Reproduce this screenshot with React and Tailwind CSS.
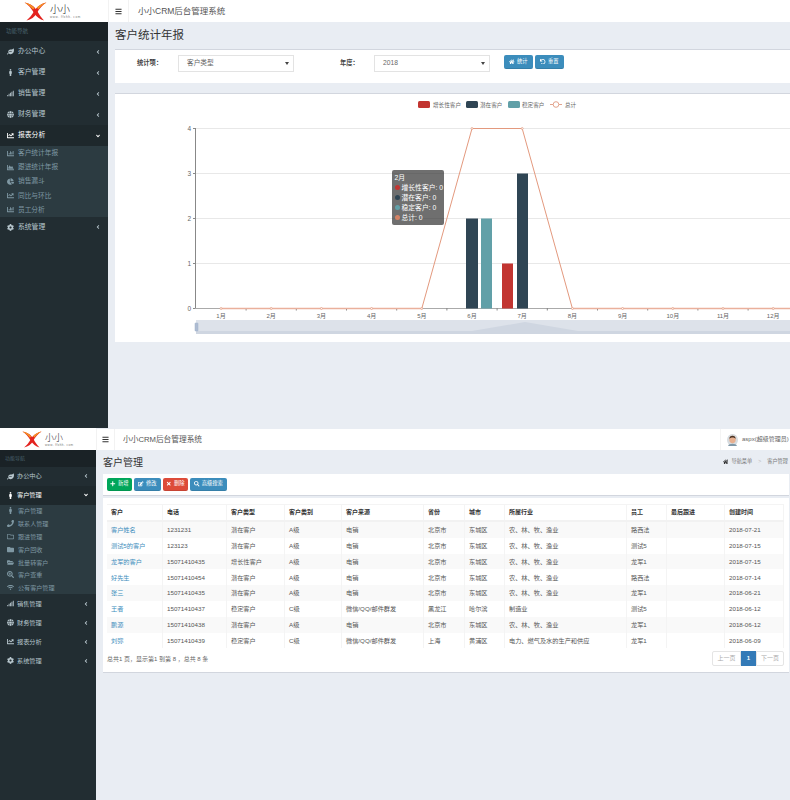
import React from 'react';
import { FaLeaf, FaMale, FaSignal, FaGlobe, FaChartLine, FaCog, FaChartBar, FaChartArea, FaChartPie, FaAngleLeft, FaAngleDown, FaBars, FaHome, FaUndo, FaPlus, FaEdit, FaTimes, FaSearch, FaPhone, FaRegFolder, FaFolder, FaFolderOpen, FaSearchPlus, FaWifi } from 'react-icons/fa';

const font = { fontFamily: '"Liberation Sans","Noto Sans CJK SC",sans-serif' };

function Logo({ big }) {
  return (
    <div className={`flex items-center bg-white shrink-0 ${big ? 'w-[108px] h-[22px] pl-[24px] gap-[3px]' : 'w-[96px] h-[21px] pl-[22px] gap-[3px]'}`}>
      <svg width={big ? 23 : 20} height={big ? 19 : 17} viewBox="0 0 24 20" className="shrink-0">
        <path d="M0.5 0.5 C7 1.5 11 5 13.5 9 C16 13.5 18.5 17 21 19.5 C16.5 18.5 13 15.5 10.5 11.5 C7.5 6.5 4.5 3 0.5 0.5Z" fill="#e3231f" />
        <path d="M23.5 0.5 C17 2 13.5 5 11 9 C8 14 5.5 17 2.5 19.5 C7.5 18.5 11 16 13.5 11.5 C16 7 19.5 3 23.5 0.5Z" fill="#e3231f" />
        <path d="M0.5 0.5 C5 1 8.5 3.5 11 6.5 L9.5 8 C7 4.5 4 2.5 0.5 0.5Z" fill="#f59a23" />
        <path d="M23.5 0.5 C19.5 1 16 3.5 13.5 6 L15 7.5 C17.5 4.5 20 2.5 23.5 0.5Z" fill="#f59a23" />
      </svg>
      <div className="flex flex-col items-start leading-none pt-[1px]">
        <span className={`${big ? 'text-[10px] leading-[11px]' : 'text-[9px] leading-[10px]'} font-light text-[#222]`}>小小</span>
        <span className={`text-[3px] leading-[4px] text-[#777] whitespace-nowrap ${big ? 'tracking-[0.6px]' : 'tracking-[0.45px]'}`}>www. ffxhh. com</span>
      </div>
    </div>
  );
}

function NavItem({ icon: Icon, label, open, h, big }) {
  return (
    <div className={`flex items-center pl-[7px] pr-[7px] ${big ? 'text-[6.8px]' : 'text-[6.2px]'} ${h} ${open ? 'bg-[#1e282c] text-white' : 'text-[#b8c7ce]'}`}>
      <Icon className={`w-[7px] h-[7px] shrink-0 ${big ? 'mr-[4px]' : 'mr-[3px]'}`} />
      <span className="flex-1">{label}</span>
      {open ? <FaAngleDown className="w-[6px] h-[6px]" /> : <FaAngleLeft className="w-[6px] h-[6px]" />}
    </div>
  );
}

function SubItem({ icon: Icon, label, h, big }) {
  return (
    <div className={`flex items-center pl-[7px] ${big ? 'text-[6.7px]' : 'text-[6.1px]'} text-[#7f98a3] ${h}`}>
      <Icon className="w-[7px] h-[7px] shrink-0 mr-[4px] text-[#7f98a3]" />
      <span>{label}</span>
    </div>
  );
}

function Btn({ icon: Icon, label, cls }) {
  return (
    <button className={`flex items-center justify-center gap-[2px] rounded-[2px] text-white text-[5.3px] border-b border-black/10 ${cls}`}>
      <Icon className="w-[5.5px] h-[5.5px]" />{label}
    </button>
  );
}

function Select({ value }) {
  return (
    <div className="w-[116px] h-[17px] bg-white border border-[#e3e3e3] flex items-center justify-between pl-[8px] pr-[4px] text-[6.7px] text-[#666]">
      <span>{value}</span>
      <span className="w-0 h-0 border-l-[2px] border-r-[2px] border-t-[3px] border-l-transparent border-r-transparent border-t-[#444]" />
    </div>
  );
}

const months = ['1月','2月','3月','4月','5月','6月','7月','8月','9月','10月','11月','12月'];
const cx = (i) => 221 + i * 50.2;
const top = 128, Y = (v) => 308.5 - v * 45;

function Chart() {
  const pts = [0,0,0,0,0,4,4,0,0,0,0,0].map((v, i) => `${cx(i)},${Y(v)}`).join(' ');
  return (
    <svg width="675" height="249" viewBox="115 93 675 249" className="block" style={font}>
      <rect x="418" y="101" width="12" height="7" rx="1.5" fill="#c23531" />
      <text x="433" y="107" fontSize="5.6" fill="#666">增长性客户</text>
      <rect x="466" y="101" width="12" height="7" rx="1.5" fill="#2f4554" />
      <text x="480" y="107" fontSize="5.6" fill="#666">潜在客户</text>
      <rect x="508" y="101" width="12" height="7" rx="1.5" fill="#61a0a8" />
      <text x="522" y="107" fontSize="5.6" fill="#666">稳定客户</text>
      <line x1="550" y1="104.5" x2="562" y2="104.5" stroke="#e3a48d" />
      <circle cx="556" cy="104.5" r="2.8" fill="#fff" stroke="#e3a48d" />
      <text x="565" y="107" fontSize="5.6" fill="#666">总计</text>
      {[1,2,3,4].map((v) => <line key={v} x1="195" y1={Y(v)} x2="790" y2={Y(v)} stroke="#e8e8e8" />)}
      <line x1="195.5" y1={top} x2="195.5" y2="309" stroke="#888" />
      <line x1="195" y1="308.5" x2="790" y2="308.5" stroke="#aaa" />
      {[0,1,2,3,4].map((v) => (
        <g key={v}>
          <line x1="193" y1={Y(v)} x2="195" y2={Y(v)} stroke="#888" />
          <text x="191" y={Y(v) + 2.5} fontSize="6.5" fill="#666" textAnchor="end">{v}</text>
        </g>
      ))}
      {months.map((m, i) => (
        <g key={m}>
          <line x1={cx(i) + 25.1} y1="308" x2={cx(i) + 25.1} y2="310.5" stroke="#888" />
          <text x={cx(i)} y="317.5" fontSize="6" fill="#666" textAnchor="middle">{m}</text>
        </g>
      ))}
      <rect x="466" y={Y(2)} width="12" height="90" fill="#2f4554" />
      <rect x="481" y={Y(2)} width="11" height="90" fill="#61a0a8" />
      <rect x="502" y={Y(1)} width="11" height="45" fill="#c23531" />
      <rect x="517" y={Y(3)} width="11" height="135" fill="#2f4554" />
      <polyline points={pts} fill="none" stroke="#e3997e" strokeWidth="1" />
      <line x1="221" y1="308.5" x2="422" y2="308.5" stroke="#eab09c" strokeWidth="1.5" />
      <line x1="572" y1="308.5" x2="790" y2="308.5" stroke="#eab09c" strokeWidth="1.5" />
      {[0,1,2,3,4,5,6,7,8,9,10,11].map((i) => <circle key={i} cx={cx(i)} cy={i === 5 || i === 6 ? Y(4) : Y(0)} r="1" fill="#fff" stroke="#e3997e" strokeWidth="0.7" />)}
      <rect x="196" y="320" width="594" height="14" fill="#dde2ea" />
      <path d="M196 331 L472 331 L525 322 L578 331 L790 331 L790 334 L196 334Z" fill="#cfd6e1" />
      <rect x="195" y="323" width="3" height="8" rx="0.5" fill="#aebcd2" stroke="#9fb1cb" strokeWidth="0.5" />
    </svg>
  );
}

function Tooltip() {
  const rows = [['#c23531','增长性客户: 0'],['#2f4554','潜在客户: 0'],['#61a0a8','稳定客户: 0'],['#d48265','总计: 0']];
  return (
    <div className="absolute left-[277px] top-[76px] w-[52px] h-[55px] rounded-[2px] bg-[#323232]/70 text-white text-[6.8px] leading-[10px] pl-[2.5px] pt-[2.5px]">
      <div>2月</div>
      {rows.map(([c, t]) => (
        <div key={t} className="flex items-center whitespace-nowrap">
          <span className="w-[4.5px] h-[4.5px] rounded-full mr-[2px] ml-[0.5px] shrink-0" style={{ background: c }} />{t}
        </div>
      ))}
    </div>
  );
}

function ScreenOne() {
  return (
    <div className="flex h-[428px] overflow-hidden">
      <div className="w-[108px] shrink-0 flex flex-col bg-[#222d32]">
        <Logo big />
        <div className="h-[19px] bg-[#1a2226] text-[#4b646f] text-[5.5px] flex items-center pl-[6px]">功能导航</div>
        <NavItem big icon={FaLeaf} label="办公中心" h="h-[21px]" />
        <NavItem big icon={FaMale} label="客户管理" h="h-[21px]" />
        <NavItem big icon={FaSignal} label="销售管理" h="h-[21px]" />
        <NavItem big icon={FaGlobe} label="财务管理" h="h-[21px]" />
        <NavItem big icon={FaChartLine} label="报表分析" open h="h-[21px]" />
        <div className="bg-[#2c3b41] flex flex-col">
          <SubItem big icon={FaChartBar} label="客户统计年报" h="h-[14.2px]" />
          <SubItem big icon={FaChartArea} label="跟进统计年报" h="h-[14.2px]" />
          <SubItem big icon={FaChartPie} label="销售漏斗" h="h-[14.2px]" />
          <SubItem big icon={FaChartLine} label="同比与环比" h="h-[14.2px]" />
          <SubItem big icon={FaChartBar} label="员工分析" h="h-[14.2px]" />
        </div>
        <NavItem big icon={FaCog} label="系统管理" h="h-[21px]" />
      </div>
      <div className="flex-1 min-w-0 bg-[#e9edf3] flex flex-col">
        <div className="h-[22px] bg-white flex items-center shrink-0">
          <div className="w-[21px] h-full border-x border-[#f2f2f2] flex items-center justify-center">
            <FaBars className="w-[7px] h-[7px] text-[#333]" />
          </div>
          <span className="ml-[9px] text-[8.5px] text-[#555]">小小CRM后台管理系统</span>
        </div>
        <div className="h-[27px] flex items-center pl-[7px] text-[11.5px] leading-none text-[#333]">客户统计年报</div>
        <div className="ml-[7px] h-[34px] bg-white border-t-[1.5px] border-[#d2d6de] flex items-start pt-[5px] text-[6.3px] text-[#444]">
          <span className="ml-[22px] w-[41px] mt-[3px] font-bold">统计项：</span>
          <Select value="客户类型" />
          <span className="ml-[46px] w-[34px] mt-[3px] font-bold">年度：</span>
          <Select value="2018" />
          <Btn icon={FaHome} label="统计" cls="ml-[14px] w-[29px] h-[14px] bg-[#3c8dbc]" />
          <Btn icon={FaUndo} label="重置" cls="ml-[2px] w-[29px] h-[14px] bg-[#3c8dbc]" />
        </div>
        <div className="ml-[7px] mt-[10px] h-[249px] bg-white border-t-[1.5px] border-[#d2d6de] relative">
          <div className="-mt-[1.5px]"><Chart /></div>
          <Tooltip />
        </div>
      </div>
    </div>
  );
}

const cols = [
  ['客户','w-[56px]'],['电话','w-[64px]'],['客户类型','w-[58px]'],['客户类别','w-[57px]'],['客户来源','w-[82px]'],['省份','w-[41px]'],['城市','w-[40px]'],['所属行业','w-[122px]'],['员工','w-[40px]'],['最后跟进','w-[58px]'],['创建时间','w-[59px]'],
];
const ag = '农、林、牧、渔业';
const data = [
  ['客户姓名','1231231','潜在客户','A级','电销','北京市','东城区',ag,'路西法','','2018-07-21'],
  ['测试5的客户','123123','潜在客户','A级','电销','北京市','东城区',ag,'测试5','','2018-07-15'],
  ['龙军的客户','15071410435','增长性客户','A级','电销','北京市','东城区',ag,'龙军1','','2018-07-15'],
  ['好先生','15071410454','潜在客户','A级','电销','北京市','东城区',ag,'路西法','','2018-07-14'],
  ['张三','15071410435','潜在客户','A级','电销','北京市','东城区',ag,'龙军1','','2018-06-21'],
  ['王者','15071410437','稳定客户','C级','微信/QQ/邮件群发','黑龙江','哈尔滨','制造业','测试5','','2018-06-12'],
  ['鹏源','15071410438','潜在客户','A级','电销','北京市','东城区',ag,'龙军1','','2018-06-12'],
  ['刘弥','15071410439','稳定客户','C级','微信/QQ/邮件群发','上海','黄浦区','电力、燃气及水的生产和供应','龙军1','','2018-06-09'],
];

function ScreenTwo() {
  return (
    <div className="flex h-[372px] overflow-hidden">
      <div className="w-[96px] shrink-0 flex flex-col bg-[#222d32]">
        <div className="h-px bg-white"></div>
        <Logo />
        <div className="h-[16.5px] bg-[#1a2226] text-[#4b646f] text-[5px] flex items-center pl-[5px]">功能导航</div>
        <NavItem icon={FaLeaf} label="办公中心" h="h-[19px]" />
        <NavItem icon={FaMale} label="客户管理" open h="h-[19px]" />
        <div className="bg-[#2c3b41] flex flex-col">
          <SubItem icon={FaMale} label="客户管理" h="h-[12.8px]" />
          <SubItem icon={FaPhone} label="联系人管理" h="h-[12.8px]" />
          <SubItem icon={FaRegFolder} label="跟进管理" h="h-[12.8px]" />
          <SubItem icon={FaFolder} label="客户回收" h="h-[12.8px]" />
          <SubItem icon={FaFolderOpen} label="批量转客户" h="h-[12.8px]" />
          <SubItem icon={FaSearchPlus} label="客户查重" h="h-[12.8px]" />
          <SubItem icon={FaWifi} label="公有客户管理" h="h-[12.8px]" />
        </div>
        <NavItem icon={FaSignal} label="销售管理" h="h-[19px]" />
        <NavItem icon={FaGlobe} label="财务管理" h="h-[19px]" />
        <NavItem icon={FaChartLine} label="报表分析" h="h-[19px]" />
        <NavItem icon={FaCog} label="系统管理" h="h-[19px]" />
      </div>
      <div className="flex-1 min-w-0 bg-[#e9edf3] flex flex-col">
        <div className="h-px bg-[#e9edf3]"></div>
        <div className="h-[21px] bg-white flex items-center shrink-0">
          <div className="w-[19px] h-full border-x border-[#f2f2f2] flex items-center justify-center">
            <FaBars className="w-[7px] h-[7px] text-[#333]" />
          </div>
          <span className="ml-[8px] text-[7.7px] text-[#555]">小小CRM后台管理系统</span>
          <div className="ml-auto h-full w-[70px] shrink-0 border-l border-[#f4f4f4] flex items-center pl-[6px] gap-[4px]">
            <svg width="11" height="12" viewBox="0 0 11 12" className="shrink-0">
              <ellipse cx="5.5" cy="6" rx="5.5" ry="6" fill="#d6dbdf" />
              <path d="M1 12 C2 9 9 9 10 12Z" fill="#7f98a8" />
              <ellipse cx="5.5" cy="5.5" rx="3.2" ry="3.8" fill="#e8b08f" />
              <path d="M2.2 5 C2.2 0.5 8.8 0.5 8.8 5 C7.5 3 3.5 3 2.2 5Z" fill="#4a3426" />
            </svg>
            <span className="text-[6px] text-[#666] whitespace-nowrap">aspx(超级管理员)</span>
          </div>
        </div>
        <div className="h-[24px] flex items-center pl-[7px] pr-[2px] shrink-0">
          <span className="text-[10px] text-[#333]">客户管理</span>
          <div className="ml-auto flex items-center text-[5.2px] text-[#777] gap-[2px]">
            <FaHome className="w-[5.5px] h-[5.5px] text-[#333]" />
            <span className="ml-[1px]">导航菜单</span>
            <span className="mx-[4px] text-[#bbb]">&gt;</span>
            <span>客户管理</span>
          </div>
        </div>
        <div className="ml-[7px] mr-[1.5px] h-[22px] bg-white border-b border-[#d2d6de] flex items-center pl-[4px] gap-[2px] shrink-0">
          <Btn icon={FaPlus} label="新增" cls="w-[25px] h-[13px] bg-[#00a65a]" />
          <Btn icon={FaEdit} label="修改" cls="w-[27px] h-[13px] bg-[#3c8dbc]" />
          <Btn icon={FaTimes} label="删除" cls="w-[25px] h-[13px] bg-[#dd4b39]" />
          <Btn icon={FaSearch} label="高级搜索" cls="w-[37px] h-[13px] bg-[#3c8dbc]" />
        </div>
        <div className="ml-[7px] mr-[1.5px] mt-[2px] h-[175px] bg-white border-b border-[#d2d6de] px-[4px] pt-[6px] shrink-0">
          <div className="w-[677px] text-[6.2px] text-[#555]">
            <div className="flex h-[18px] border-b-2 border-[#f2f2f2] border-t border-t-[#f4f4f4] font-bold text-[#333] text-[6px]">
              {cols.map(([c, w], i) => (
                <div key={c} className={`${w} pl-[4px] flex items-center border-r border-[#f4f4f4]`}>{c}</div>
              ))}
            </div>
            {data.map((r, ri) => (
              <div key={ri} className={`flex h-[15.8px] ${ri % 2 === 0 ? 'bg-[#f9f9f9]' : 'bg-white'}`}>
                {r.map((t, i) => (
                  <div key={i} className={`${cols[i][1]} pl-[4px] flex items-center border-r border-[#f4f4f4] whitespace-nowrap overflow-hidden ${i === 0 ? 'text-[#3c8dbc]' : ''}`}>{t}</div>
                ))}
              </div>
            ))}
          </div>
          <div className="flex items-start justify-between mt-[3px]">
            <span className="text-[6px] text-[#666] mt-[4px]">总共1 页，显示第1 到第 8 ，总共 8 条</span>
            <div className="flex h-[15px] text-[6px] text-[#aaa] mr-[0.5px]">
              <div className="w-[29px] border border-[#e5e5e5] flex items-center justify-center rounded-l-[2px]">上一页</div>
              <div className="w-[15px] bg-[#337ab7] text-white flex items-center justify-center font-bold">1</div>
              <div className="w-[28px] border border-[#e5e5e5] flex items-center justify-center rounded-r-[2px]">下一页</div>
            </div>
          </div>
        </div>
      </div>
    </div>
  );
}

export default function App() {
  return (
    <div className="w-[790px] h-[800px] overflow-hidden" style={font}>
      <ScreenOne />
      <ScreenTwo />
    </div>
  );
}
